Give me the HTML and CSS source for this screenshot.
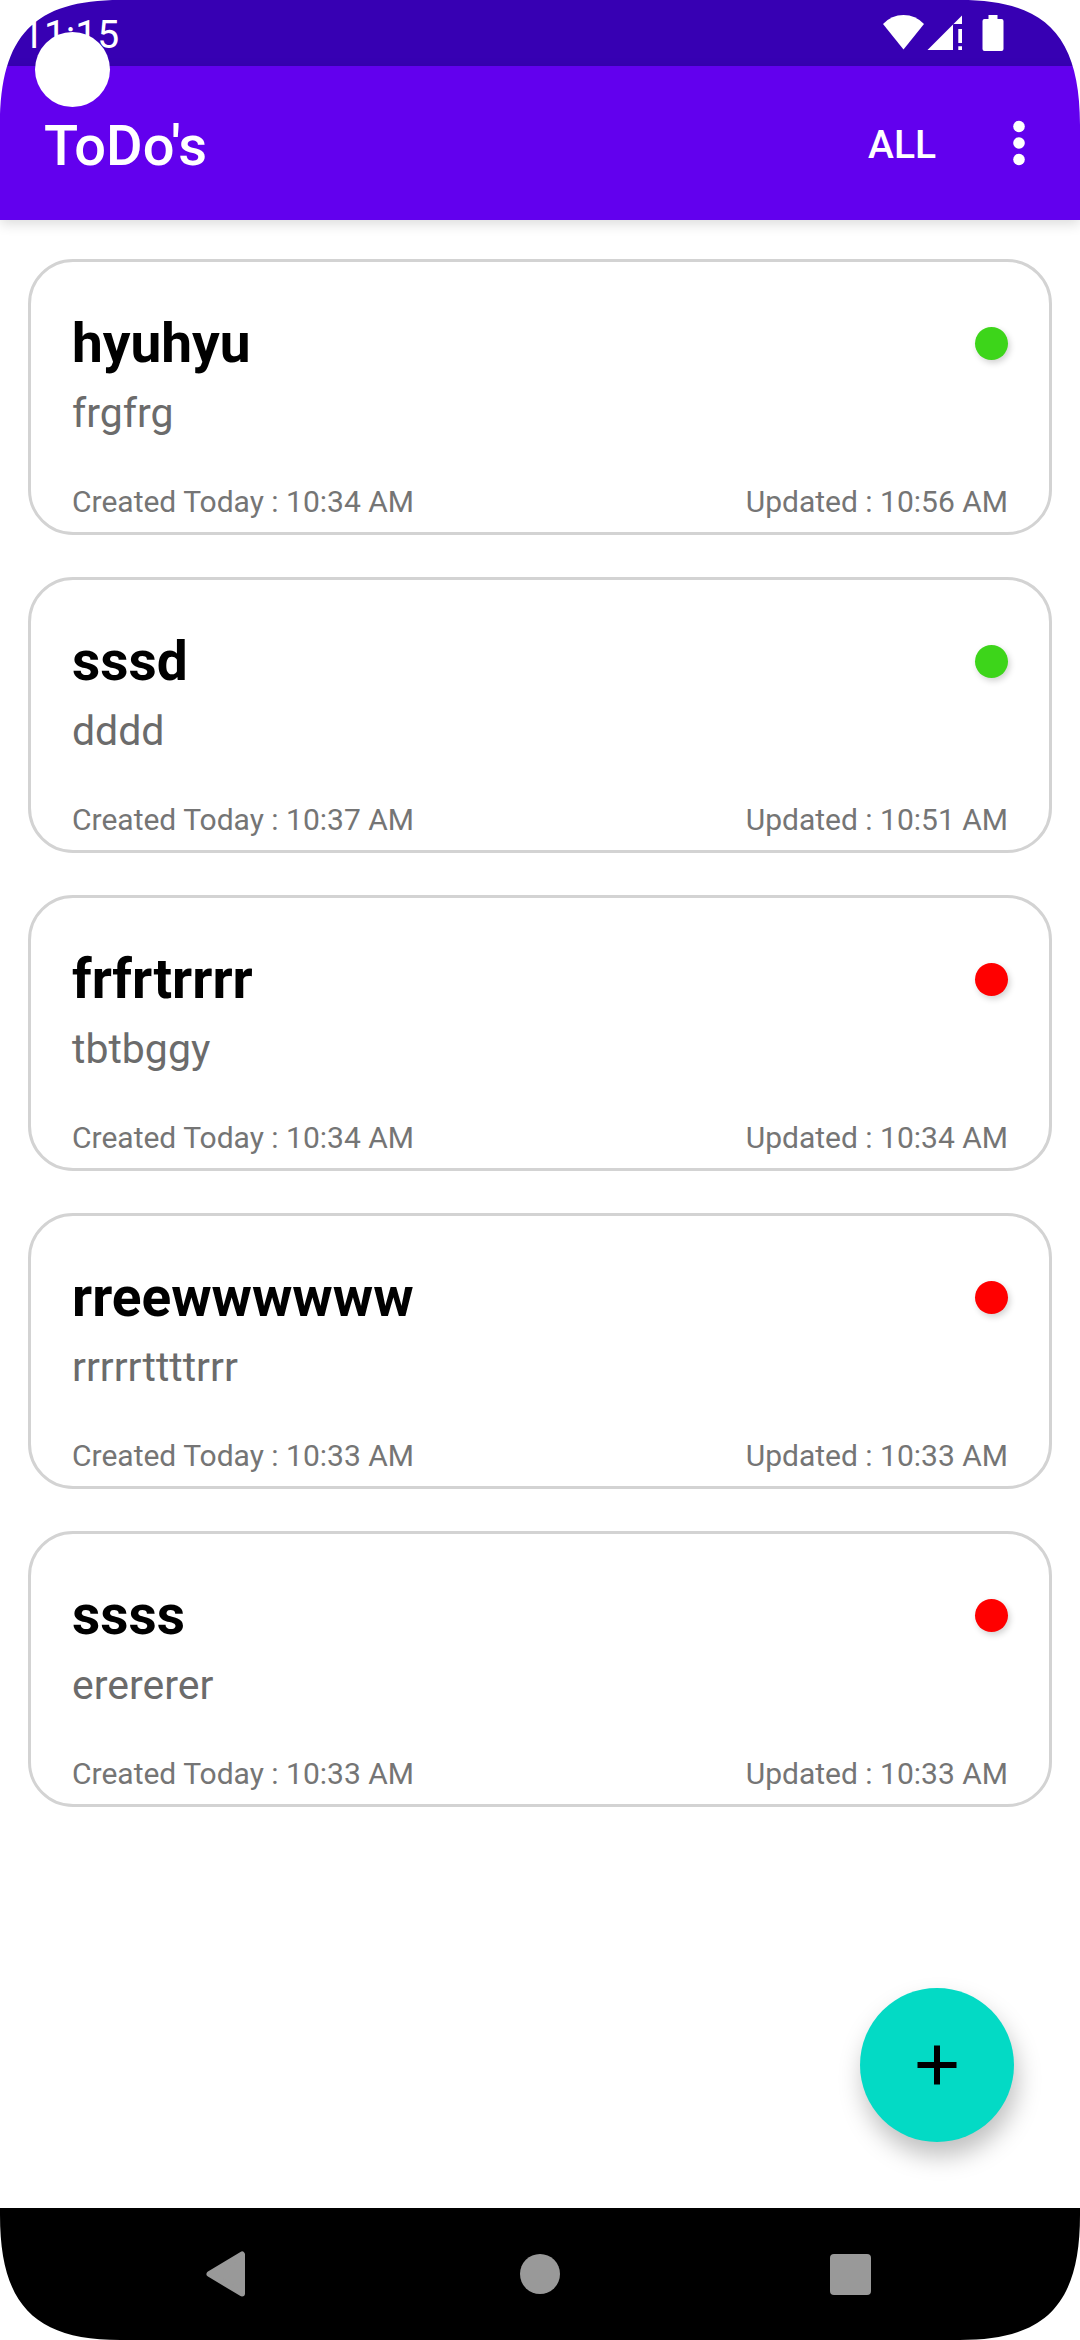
FILE: index.html
```html
<!DOCTYPE html>
<html lang="en">
<head>
<meta charset="utf-8">
<meta name="viewport" content="width=device-width">
<title>ToDo's</title>
<link rel="stylesheet" href="styles.css">
</head>
<body>
<div class="screen">
  <div class="statusbar">
    <time class="clock">11:15</time>
    <svg class="status-icons" width="121" height="38" viewBox="0 0 121 38" fill="#fff" aria-hidden="true">
      <path d="M20.500 35.500L0 10Q8.500 1 20.500 1T41 10Z"/>
      <path d="M44.500 36L79 1.500V10H70V36Z"/>
      <path d="M75.300 15H79V29H75.300ZM75.300 32.300H79V36H75.300Z"/>
      <path d="M105.500 1H114.500V5H118.500Q120.500 5 120.500 7V35Q120.500 37 118.500 37H101.500Q99.500 37 99.500 35V7Q99.500 5 101.500 5H105.500Z"/>
    </svg>
  </div>
  <header class="appbar">
    <h1 class="app-title">ToDo's</h1>
    <button class="filter" type="button">ALL</button>
    <button class="overflow" type="button" aria-label="More options">
      <svg width="12" height="46" viewBox="0 0 12 46" fill="#fff"><circle cx="6" cy="6.500" r="5.800"/><circle cx="6" cy="23" r="5.800"/><circle cx="6" cy="39.500" r="5.800"/></svg>
    </button>
  </header>
  <main class="content">
    <ul class="list">
      <li class="card">
        <div class="card-head"><h2 class="card-title">hyuhyu</h2><span class="dot done"></span></div>
        <p class="note">frgfrg</p>
        <div class="dates"><span>Created Today : 10:34 AM</span><span>Updated : 10:56 AM</span></div>
      </li>
      <li class="card">
        <div class="card-head"><h2 class="card-title">sssd</h2><span class="dot done"></span></div>
        <p class="note">dddd</p>
        <div class="dates"><span>Created Today : 10:37 AM</span><span>Updated : 10:51 AM</span></div>
      </li>
      <li class="card">
        <div class="card-head"><h2 class="card-title">frfrtrrrr</h2><span class="dot open"></span></div>
        <p class="note">tbtbggy</p>
        <div class="dates"><span>Created Today : 10:34 AM</span><span>Updated : 10:34 AM</span></div>
      </li>
      <li class="card">
        <div class="card-head"><h2 class="card-title">rreewwwwww</h2><span class="dot open"></span></div>
        <p class="note">rrrrrttttrrr</p>
        <div class="dates"><span>Created Today : 10:33 AM</span><span>Updated : 10:33 AM</span></div>
      </li>
      <li class="card">
        <div class="card-head"><h2 class="card-title">ssss</h2><span class="dot open"></span></div>
        <p class="note">erererer</p>
        <div class="dates"><span>Created Today : 10:33 AM</span><span>Updated : 10:33 AM</span></div>
      </li>
    </ul>
    <button class="fab" type="button" aria-label="Add">
      <svg width="40" height="40" viewBox="0 0 40 40"><path d="M20 0.500V39.500M0.500 20H39.500" stroke="#000" stroke-width="6"/></svg>
    </button>
  </main>
  <nav class="navbar">
    <button class="nav-button" type="button" aria-label="Back">
      <svg width="48" height="48" viewBox="0 0 48 48" fill="#999" stroke="#999" stroke-width="6" stroke-linejoin="round"><path d="M4.500 24L37 4.500V43.500Z"/></svg>
    </button>
    <button class="nav-button" type="button" aria-label="Home">
      <svg width="48" height="48" viewBox="0 0 48 48" fill="#999"><circle cx="24" cy="24" r="20"/></svg>
    </button>
    <button class="nav-button" type="button" aria-label="Recent apps">
      <svg width="48" height="48" viewBox="0 0 48 48" fill="#999"><rect x="3" y="4" width="41" height="41" rx="4"/></svg>
    </button>
  </nav>
  <span class="camera"></span>
  <svg class="corner top left" viewBox="0 0 125 125"><path d="M0 0V125C0 35 35 0 120 0Z"/></svg>
  <svg class="corner top right" viewBox="0 0 125 125"><path d="M0 0V125C0 35 35 0 120 0Z"/></svg>
  <svg class="corner bottom left" viewBox="0 0 125 125"><path d="M0 0V125C0 35 35 0 120 0Z"/></svg>
  <svg class="corner bottom right" viewBox="0 0 125 125"><path d="M0 0V125C0 35 35 0 120 0Z"/></svg>
</div>
</body>
</html>
```
FILE: styles.css
```css
* {
  box-sizing: border-box;
}

body {
  margin: 0;
  background: #fff;
  color: #000;
  font-family: Roboto, "Liberation Sans", sans-serif;
}

h1, h2, p, ul {
  margin: 0;
  padding: 0;
}

button {
  border: 0;
  padding: 0;
  background: none;
  font-family: inherit;
}

svg {
  display: block;
}

.screen {
  position: relative;
  display: flex;
  flex-direction: column;
  min-height: 100vh;
}

.statusbar {
  display: flex;
  justify-content: space-between;
  align-items: center;
  height: 66px;
  padding: 0 76px 0 22px;
  background: #3700b3;
}

.clock {
  padding-top: 4px;
  color: #fff;
  font-size: 39px;
  line-height: 46px;
}

.appbar {
  position: relative;
  display: flex;
  align-items: center;
  height: 154px;
  padding: 0 44px;
  background: #6200ee;
  box-shadow: 0 4px 12px rgba(0, 0, 0, 0.14);
  color: #fff;
}

.app-title {
  flex: 1;
  padding-top: 6px;
  font-size: 56px;
  font-weight: 500;
  line-height: 64px;
}

.filter {
  padding: 4px 66px 0 0;
  color: inherit;
  font-size: 39px;
  font-weight: 500;
  line-height: 46px;
}

.overflow {
  padding: 0 11px;
}

.content {
  position: relative;
  flex: 1;
}

.list {
  display: flex;
  flex-direction: column;
  gap: 42px;
  padding: 39px 28px;
  list-style: none;
}

.card {
  padding: 49px 41px 13px;
  border: 3px solid #d3d3d3;
  border-radius: 45px;
}

.card-head {
  display: flex;
  justify-content: space-between;
  align-items: center;
}

.card-title {
  font-size: 55px;
  font-weight: 700;
  line-height: 64px;
}

.dot {
  width: 33px;
  height: 33px;
  border-radius: 50%;
  box-shadow: 2px 3px 6px rgba(0, 0, 0, 0.18);
}

.done {
  background: #3dd51a;
}

.open {
  background: #f00;
}

.note {
  margin-top: 14px;
  color: #6b6b6b;
  font-size: 41px;
  line-height: 48px;
}

.dates {
  display: flex;
  justify-content: space-between;
  margin-top: 47px;
  color: #757575;
  font-size: 30px;
  line-height: 35px;
}

.fab {
  position: absolute;
  right: 66px;
  bottom: 66px;
  display: grid;
  place-items: center;
  width: 154px;
  height: 154px;
  border-radius: 50%;
  background: #03dac5;
  box-shadow: 3px 14px 24px rgba(0, 0, 0, 0.25);
}

.navbar {
  display: flex;
  justify-content: space-between;
  align-items: center;
  height: 132px;
  padding: 0 169px;
  background: #000;
}

.nav-button {
  display: grid;
  place-items: center;
  width: 120px;
  height: 120px;
}

.camera {
  position: absolute;
  top: 32px;
  left: 35px;
  width: 75px;
  height: 75px;
  border-radius: 50%;
  background: #fff;
}

.corner {
  position: absolute;
  width: 125px;
  height: 125px;
  fill: #fff;
}

.top {
  top: 0;
}

.bottom {
  bottom: 0;
  transform: scaleY(-1);
}

.left {
  left: 0;
}

.right {
  right: 0;
  transform: scaleX(-1);
}

.bottom.right {
  transform: scale(-1);
}
```
